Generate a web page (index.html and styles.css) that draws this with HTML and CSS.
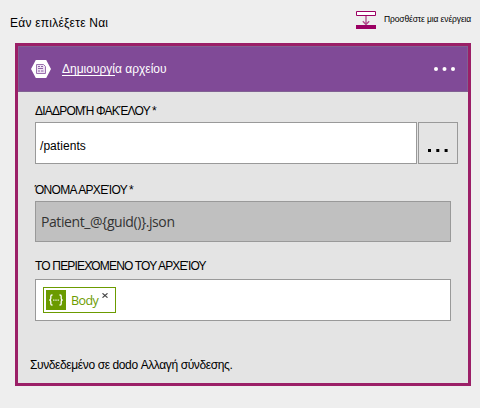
FILE: index.html
```html
<!DOCTYPE html>
<html lang="el">
<head>
<meta charset="utf-8">
<title>Εάν επιλέξετε Ναι</title>
<link rel="stylesheet" href="styles.css">
</head>
<body>
<header class="branch">
  <span class="branch-title">Εάν επιλέξετε Ναι</span>
  <span class="add-action">
    <svg class="add-icon" width="20" height="18" viewBox="0 0 20 18"><path d="M.5.5h19v4H.5z" fill="#fff" stroke="#9b0063"/><path d="M10 5v8M6.8 10.3l3.2 3.2 3.2-3.2" fill="none" stroke="#b04388" stroke-width="1.3"/><path d="M0 14h20v4H0z" fill="#9b0063"/></svg>
    <span class="add-label">Προσθέστε μια ενέργεια</span>
  </span>
</header>
<main class="card">
  <div class="card-head">
    <svg class="hex" width="20" height="18" viewBox="0 0 20 18"><path d="M4.8 0h10.4L20 9l-4.800 9H4.800L0 9z" fill="#fff"/><path d="M5.500 4.500h7l2 2v7h-9z" fill="#eee3f3" stroke="#9b70ae"/><path d="M7 6.500h2M10 6.500h2M7 8.500h5M7 11h2M10 11h2.500" stroke="#8f62a6" fill="none"/></svg>
    <span class="card-title"><u>Δημιουργί</u>α αρχείου</span>
    <svg class="more" width="21" height="4" viewBox="0 0 21 4" fill="#fff"><circle cx="2" cy="2" r="2"/><circle cx="10.500" cy="2" r="2"/><circle cx="19" cy="2" r="2"/></svg>
  </div>
  <div class="card-body">
    <label class="label l1">ΔΙΑΔΡΟΜΉ ΦΑΚΈΛΟΥ<span class="req">*</span></label>
    <div class="row">
      <div class="field path">/patients</div>
      <button class="browse"><svg width="20" height="3" viewBox="0 0 20 3"><path d="M0 0h3v3H0zM8.300 0h3v3h-3zM16.600 0h3v3h-3z"/></svg></button>
    </div>
    <label class="label l2">ΌΝΟΜΑ ΑΡΧΕΊΟΥ<span class="req">*</span></label>
    <div class="field name"><span>Patient_@{guid()}.json</span></div>
    <label class="label l3">ΤΟ ΠΕΡΙΕΧΌΜΕΝΟ ΤΟΥ ΑΡΧΕΊΟΥ</label>
    <div class="field content">
      <span class="token">
        <svg width="20" height="20" viewBox="0 0 20 20"><path d="M0 0h20v20H0z" fill="#6b9b00"/><path d="M6.500 5H6q-1.200 0-1.200 1.200v2.300Q4.800 10 3.300 10q1.500 0 1.500 1.500v2.300Q4.800 15 6 15h.5M13.500 5h.5q1.200 0 1.200 1.200v2.300q0 1.500 1.500 1.500-1.500 0-1.500 1.500v2.300q0 1.200-1.200 1.200h-.5" fill="none" stroke="#fff" stroke-width="1.300"/><path d="M7.200 9.500h1.200v1.200H7.200zM9.400 9.500h1.200v1.200H9.400zM11.600 9.500h1.200v1.200h-1.200z" fill="#fff"/></svg>
        <span class="token-text">Body</span>
        <svg class="close" width="6" height="5" viewBox="0 0 6 5"><path d="M.5.300l5 4.400M5.500.300l-5 4.400" stroke="#444" stroke-width="1.100"/></svg>
      </span>
    </div>
    <p class="connection">Συνδεδεμένο σε dodo Αλλαγή σύνδεσης.</p>
  </div>
</main>
</body>
</html>
```
FILE: styles.css
```css
* { box-sizing: border-box; }
body { margin: 0; width: 480px; height: 408px; background: #eee; color: #000; font: 12px/16px "Liberation Sans", Arial, sans-serif; overflow: hidden; white-space: nowrap; }
.branch { display: flex; justify-content: space-between; height: 43px; padding: 11px 8px 0 10px; }
.branch-title { padding-top: 4px; letter-spacing: .23px; }
.add-action { display: flex; width: 116px; }
.add-label { margin-left: 8px; font-size: 8.500px; letter-spacing: -.12px; }
.add-icon { flex: none; }
.card { width: 456px; height: 343px; margin-left: 15px; border: 3px solid #9b1f67; background: #e4e4e4; }
.card-head { display: flex; align-items: center; height: 46px; padding: 0 12px; border: 1px solid #816193; background: #804a97; color: #fff; }
.card-title { margin-left: 11px; letter-spacing: 0; }
.card-title u { text-underline-offset: 2px; }
.more { margin-left: auto; }
.card-body { padding: 11px 10px 0 17px; }
.label { display: block; height: 16px; }
.req { margin-left: 2px; }
.l1 { margin-bottom: 3px; letter-spacing: -.78px; }
.l2 { margin: 18px 0 3px; letter-spacing: -.68px; }
.l3 { margin: 16px 0 5px; letter-spacing: -.83px; }
.row { display: flex; gap: 1px; }
.field { display: flex; align-items: center; width: 416px; height: 42px; border: 1px solid #999; background: #fff; }
.path { width: 382px; padding: 6px 4px 0; letter-spacing: .05px; }
.browse { width: 40px; height: 42px; padding: 13px 0 0; border: 1px solid #999; background: #e4e4e4; line-height: 0; }
.name { height: 41px; padding-left: 5px; background: #c0c0c0; color: #333; font: 14px/20px "Open Sans", sans-serif; letter-spacing: -.42px; }
.content { padding-left: 7px; }
.token { display: flex; width: 73px; height: 26px; padding: 2px; border: 1px solid #6b9b00; color: #6b9b00; }
.token-text { width: 27px; margin-left: 5px; font: 12.5px/22px "Open Sans", sans-serif; letter-spacing: -.6px; }
.close { margin: 3px 0 0 4px; }
.connection { margin: 36px 0 0 -5px; letter-spacing: -.39px; }
```
